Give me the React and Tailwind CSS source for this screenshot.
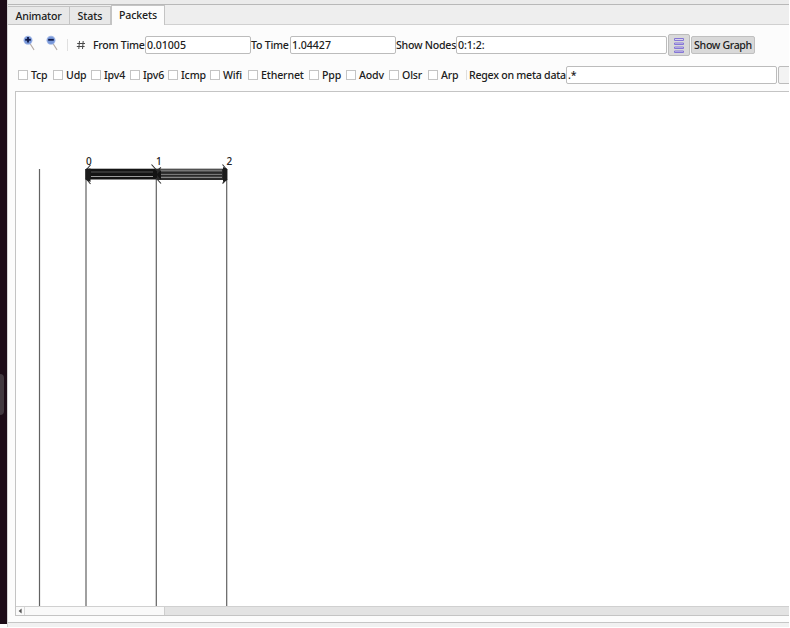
import React from "react";

const protocols = [
  { name: "Tcp", cell: "w-[35px]" },
  { name: "Udp", cell: "w-[38px]" },
  { name: "Ipv4", cell: "w-[39px]" },
  { name: "Ipv6", cell: "w-[38px]" },
  { name: "Icmp", cell: "w-[42px]" },
  { name: "Wifi", cell: "w-[38px]" },
  { name: "Ethernet", cell: "w-[61px]" },
  { name: "Ppp", cell: "w-[37px]" },
  { name: "Aodv", cell: "w-[43px]" },
  { name: "Olsr", cell: "w-[39px]" },
  { name: "Arp", cell: "w-[38px]" },
];

function Magnifier({ plus }) {
  return (
    <svg width="14" height="18" viewBox="0 0 14 18" className="shrink-0">
      <path d="M7 9.5 L10.8 15.5" stroke="#b5aaa5" strokeWidth="1.2" strokeLinecap="round" />
      <circle cx="5" cy="6.3" r="4.5" fill="#a3b8e6" />
      <circle cx="5" cy="6.3" r="3.6" fill="#7898da" />
      <path d="M2.2 5.8 H7.8" stroke="#101a48" strokeWidth="1.8" />
      {plus && <path d="M5 3 V8.6" stroke="#101a48" strokeWidth="1.8" />}
    </svg>
  );
}

function Field({ value, className }) {
  return (
    <div className={`flex h-[18px] shrink-0 items-center rounded-[2px] border border-[#bcbcbc] bg-white pl-[1px] ${className}`}>
      {value}
    </div>
  );
}

function Tab({ label, active, className }) {
  return (
    <div
      className={`flex shrink-0 justify-center border-r border-[#c4c4c4] ${
        active ? "h-[20px] border-l border-t bg-[#fcfcfc] pt-[1px]" : "mt-[1px] h-[19px] border-b border-t bg-[#e8e8e8] pt-[1px]"
      } ${className}`}
    >
      {label}
    </div>
  );
}

function Timeline() {
  return (
    <svg width="773" height="514" viewBox="16 92 773 514" className="block">
      <g stroke="#626262" strokeWidth="1.2">
        <path d="M39.5 169V606M86 169V606M156.3 169V606M226.7 169V606" />
      </g>
      <rect x="86" y="168.7" width="71" height="10.8" fill="#141414" />
      <path d="M91 172H154" stroke="#666" strokeWidth="0.8" />
      <path d="M91 176.5H154" stroke="#aaa" strokeWidth="0.9" />
      <rect x="157" y="168.7" width="70" height="11.3" fill="#2a2a2a" />
      <path d="M160 170.5H222" stroke="#777" strokeWidth="2" />
      <path d="M160 174.4H222" stroke="#999" strokeWidth="0.8" />
      <path d="M160 177.3H222" stroke="#aaa" strokeWidth="0.9" />
      <g fill="none" stroke="#303030" strokeWidth="1.1">
        <path d="M90.5 165L86 170M86 178.5L90.5 184M151.5 164.5L157 170.5L161 167.5M156 178L161 183.5M222.5 164.5L227 170M227 179L222.5 183.5" />
      </g>
      <path d="M85.3 169V179.5L90.5 182V168.5ZM227.3 169V180L223 182V167Z" fill="#1c1c1c" />
      <path d="M153 169L157 174L161 170V180L157 175L153 179Z" fill="#141414" />
      <g fill="#222" fontFamily="'Noto Sans', sans-serif" fontSize="10">
        <text x="86" y="165">0</text>
        <text x="156" y="165">1</text>
        <text x="226.5" y="165">2</text>
      </g>
    </svg>
  );
}

export default function App() {
  return (
    <div className="flex h-[628px] w-[790px] overflow-hidden bg-white font-['Noto_Sans',sans-serif] text-[10.6px] font-medium leading-[16px] tracking-[-0.05px] whitespace-nowrap text-[#202020]">
      <div className="flex h-[624px] w-[7px] shrink-0 flex-col bg-[#1d0d18] pt-[374px]">
        <div className="h-[41px] w-[4px] rounded-r-[4px] bg-[#423940]" />
      </div>
      <div className="flex h-[627px] w-[782px] shrink-0 flex-col overflow-hidden border-l border-[#d4d4d4] bg-[#fcfcfc]">
        <div className="h-[5px] shrink-0 border-b border-[#b8b8b8] bg-[#ebebeb]" />
        <div className="flex h-[20px] shrink-0 bg-[#eeeeee]">
          <Tab label="Animator" className="w-[62px] tracking-[-0.2px]" />
          <Tab label="Stats" className="w-[41px]" />
          <Tab label="Packets" active className="w-[54px] tracking-[-0.15px]" />
          <div className="h-[20px] flex-1 border-b border-[#d0d0d0]" />
        </div>

        <div className="mt-[9px] flex h-[22px] shrink-0 items-center">
          <div className="flex h-full w-[59px] shrink-0 gap-[9px] pl-[15px]">
            <Magnifier plus />
            <Magnifier />
          </div>
          <div className="h-[12px] w-px shrink-0 bg-[#e0e0e0]" />
          <div className="flex w-[25px] shrink-0 justify-end pr-[7px]">
            <svg width="10" height="10" viewBox="0 0 10 10" className="shrink-0">
              <path d="M3.5 1L2.8 9M7.2 1L6.5 9M1.2 3.5H9M.8 6.5H8.6" stroke="#4a4a4a" strokeWidth="1" />
            </svg>
          </div>
          <span className="w-[52px] shrink-0 tracking-[-0.28px]">From Time</span>
          <Field value="0.01005" className="w-[106px]" />
          <span className="w-[39px] shrink-0 tracking-[-0.25px]">To Time</span>
          <Field value="1.04427" className="w-[106px]" />
          <span className="w-[60px] shrink-0 tracking-[-0.25px]">Show Nodes</span>
          <Field value="0:1:2:" className="w-[211px]" />
          <div className="ml-[1px] flex h-[22px] w-[22px] shrink-0 items-center justify-center rounded-[2px] border border-[#bcbcbc] bg-[#d9d9d9]">
            <svg width="12" height="17" viewBox="0 0 12 17">
              <g fill="#d8d3ee" stroke="#8576d6" strokeWidth="1">
                <path d="M1.5 1.5h9v2h-9zM1.5 6h9v1.5h-9zM1.5 10h9v1.5h-9zM1.5 14h9v1.5h-9z" />
              </g>
            </svg>
          </div>
          <div className="ml-[1px] flex h-[18px] w-[64px] shrink-0 items-center justify-center rounded-[2px] border border-[#c0c0c0] bg-[#d9d9d9] tracking-[-0.35px]">
            Show Graph
          </div>
        </div>

        <div className="mt-[9px] flex h-[20px] shrink-0 items-center pl-[10px]">
          {protocols.map((p) => (
            <div key={p.name} className={`flex shrink-0 items-center gap-[3px] tracking-[-0.15px] ${p.cell}`}>
              <span className="h-[10px] w-[10px] shrink-0 border border-[#c4c4c4] bg-white" />
              <span>{p.name}</span>
            </div>
          ))}
          <div className="h-[10px] w-px shrink-0 bg-[#dedede]" />
          <span className="w-[99px] shrink-0 pl-[2px] tracking-[-0.25px]">Regex on meta data</span>
          <Field value=".*" className="w-[211px]" />
          <div className="ml-[1px] h-[18px] w-[16px] shrink-0 rounded-l-[2px] border border-[#bcbcbc] bg-[#f3f3f3]" />
        </div>

        <div className="ml-[7px] mt-[6px] flex h-[525px] shrink-0 flex-col border-b border-l border-t border-[#c4c4c4] bg-white">
          <div className="h-[514px] shrink-0 overflow-hidden">
            <Timeline />
          </div>
          <div className="flex h-[9px] shrink-0 border-t border-[#d0d0d0] bg-[#e3e3e3]">
            <div className="flex w-[9px] items-center justify-center border-r border-[#d8d8d8] bg-[#fafafa]">
              <svg width="4" height="6" viewBox="0 0 4 6">
                <path d="M3.6 .6V5.4L.6 3Z" fill="#555" />
              </svg>
            </div>
            <div className="w-[140px] border-r border-[#cecece] bg-[#f9f9f9]" />
          </div>
        </div>
        <div className="mt-[6px] h-px shrink-0 bg-[#c6c6c6]" />
        <div className="flex-1 bg-[#f1f1f1]" />
      </div>
    </div>
  );
}
